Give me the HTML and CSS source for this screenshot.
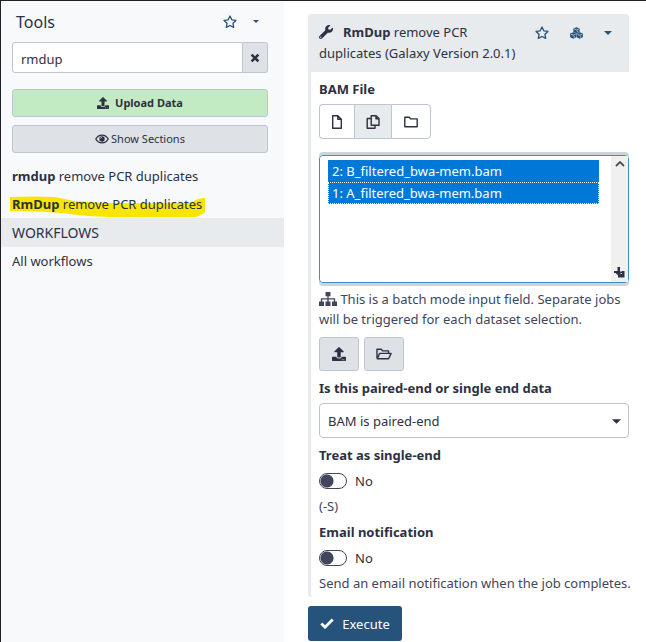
FILE: index.html
```html
<!DOCTYPE html>
<html lang="en">
<head>
<meta charset="utf-8">
<meta name="viewport" content="width=device-width, initial-scale=1">
<title>RmDup - Galaxy</title>
<link rel="stylesheet" href="styles.css">
</head>
<body>
<svg class="defs" aria-hidden="true">
  <symbol id="star" viewBox="0 0 16 16"><path d="M8 1.200l2.100 4.300 4.700.7-3.400 3.300.8 4.700L8 12l-4.200 2.200.8-4.700L1.200 6.200l4.700-.7z" fill="none" stroke="currentColor" stroke-width="1.500" stroke-linejoin="round"/></symbol>
  <symbol id="caret" viewBox="0 0 8 4"><path d="M0 0h8L4 4z" fill="currentColor"/></symbol>
  <symbol id="upload" viewBox="0 0 512 512"><path fill="currentColor" d="M296 384h-80c-13.300 0-24-10.700-24-24V192h-87.700c-17.800 0-26.700-21.500-14.100-34.100L242.300 5.700c7.500-7.500 19.800-7.500 27.300 0l152.200 152.200c12.600 12.600 3.700 34.100-14.100 34.100H320v168c0 13.300-10.700 24-24 24zm216-8v112c0 13.300-10.700 24-24 24H24c-13.300 0-24-10.700-24-24V376c0-13.300 10.700-24 24-24h136v8c0 30.900 25.100 56 56 56h80c30.900 0 56-25.100 56-56v-8h136c13.300 0 24 10.700 24 24zm-124 88c0-11-9-20-20-20s-20 9-20 20 9 20 20 20 20-9 20-20zm64 0c0-11-9-20-20-20s-20 9-20 20 9 20 20 20 20-9 20-20z"/></symbol>
  <symbol id="eye" viewBox="0 0 14 10"><path d="M.8 5C3.600-.2 10.400-.2 13.200 5 10.400 10.200 3.600 10.200.8 5z" fill="none" stroke="currentColor" stroke-width="1.300"/><circle cx="7" cy="5" r="2.700" fill="currentColor"/><path d="M5.600 4.700A1.500 1.500 0 0 1 7 3.300" fill="none" stroke="#dee2e6" stroke-width=".7"/></symbol>
  <symbol id="times" viewBox="0 0 10 10"><path d="M1.600 1.600l6.800 6.800M8.400 1.600L1.600 8.400" stroke="currentColor" stroke-width="2.600"/></symbol>
  <symbol id="wrench" viewBox="0 0 512 512"><path fill="currentColor" d="M507.700 109.100c-2.200-9-13.500-12.100-20.100-5.500l-74.400 74.400-67.900-11.300L334 98.900l74.400-74.400c6.600-6.600 3.400-17.900-5.700-20.200-47.400-11.700-99.600.9-136.600 37.900-39.600 39.600-50.600 97.100-34.100 147.200L18.700 402.800c-25 25-25 65.500 0 90.500s65.500 25 90.500 0l213.200-213.200c50.100 16.700 107.500 5.700 147.400-34.200 37.100-37.100 49.700-89.300 37.900-136.800zM64 472a24 24 0 1 1 0-48 24 24 0 0 1 0 48z"/></symbol>
  <symbol id="cubes" viewBox="0 0 14 13"><path fill="currentColor" d="M7 .2l3.400 1.300v3.900L7 6.800 3.600 5.400V1.500zM3.500 5.800L6.800 7.100v4.100l-3.300 1.600L.1 11.200V7.100zM10.500 5.800l3.400 1.300v4.100l-3.400 1.600-3.300-1.600V7.100z"/><path fill="none" stroke="#e7ebee" stroke-width=".8" d="M4.600 2.200L7 3.200l2.400-1M8 5.600V4M1.100 7.900l2.400 1 2.400-1M4.500 11.600V9.900M8.100 7.900l2.400 1 2.400-1M11.500 11.600V9.900"/></symbol>
  <symbol id="file" viewBox="0 0 12 14"><path d="M1.700.8h5.100l3.500 3.500v8.900H1.700zM6.800.8v3.500h3.500" fill="none" stroke="currentColor" stroke-width="1.400" stroke-linejoin="round"/></symbol>
  <symbol id="copy" viewBox="0 0 14 14"><path d="M5.200.7h4.900L13 3.600v6.700H5.200zM10 .8v2.900h3M5 3.500H1.200v9.800H9v-3" fill="none" stroke="currentColor" stroke-width="1.400" stroke-linejoin="round"/></symbol>
  <symbol id="folder" viewBox="0 0 14 12"><path d="M.8 1.300h4.400l1.500 1.600h6.500v7.900H.8z" fill="none" stroke="currentColor" stroke-width="1.400" stroke-linejoin="round"/></symbol>
  <symbol id="folder-open" viewBox="0 0 16 12"><path d="M1 10V1.200h4.200l1.600 1.700h5.700v2.400M1.200 10.700l2.500-5.300h11.400l-2.500 5.300z" fill="none" stroke="currentColor" stroke-width="1.400" stroke-linejoin="round"/></symbol>
  <symbol id="sitemap" viewBox="0 0 18 14"><path fill="currentColor" d="M6.500 0h5v4.300h-5zM0 9.500h5V14H0zM6.500 9.500h5V14h-5zM13 9.500h5V14h-5z"/><path d="M9 4v6M2.500 10V6.800h13V10" fill="none" stroke="currentColor" stroke-width="1.300"/></symbol>
  <symbol id="check" viewBox="0 0 14 11"><path d="M1.300 5.500l3.700 3.700 7.700-7.700" fill="none" stroke="currentColor" stroke-width="2.800"/></symbol>
  <symbol id="chevron" viewBox="0 0 10 6"><path d="M1 5l4-4 4 4" fill="none" stroke="currentColor" stroke-width="1.800"/></symbol>
  <symbol id="resize" viewBox="0 0 11 11"><path fill="currentColor" d="M0 4h3.500V0H6v4.500h2V4h2.500v6.500H4V8.300L1.500 6H0z"/><path d="M6.500 6.500h1.500" stroke="#f0f0f0" stroke-width="1"/></symbol>
</svg>
<div class="app">
  <aside class="sidebar">
    <header class="side-head">
      <h1>Tools</h1>
      <button class="plain" aria-label="Favorites"><svg class="star"><use href="#star"/></svg></button>
      <button class="plain" aria-label="Tool options"><svg class="caret-sm"><use href="#caret"/></svg></button>
    </header>
    <div class="search">
      <input type="text" value="rmdup" aria-label="Search tools">
      <button aria-label="Clear search"><svg class="times"><use href="#times"/></svg></button>
    </div>
    <button class="wide upload"><svg class="i12"><use href="#upload"/></svg>Upload Data</button>
    <button class="wide sections"><svg class="eye"><use href="#eye"/></svg>Show Sections</button>
    <nav>
      <a href="#rmdup"><b>rmdup</b> remove PCR duplicates</a>
      <a class="marked" href="#rmdup2">
        <svg class="marker" viewBox="0 0 197 22" preserveAspectRatio="none"><path d="M1 1q25-1 45 0l19 4c30 3 72 2 115 2 7-2 8-5 16-5v14q-5 5-12 5H110c-30 0-40-2-58-4-20-2-35-1-51-2z" fill="#f9e600"/></svg>
        <span><b>RmDup</b> remove PCR duplicates</span></a>
      <h2>WORKFLOWS</h2>
      <a href="#workflows">All workflows</a>
    </nav>
  </aside>
  <main>
    <form class="tool">
      <header class="tool-head">
        <p><svg class="wrench"><use href="#wrench"/></svg><b>RmDup</b> remove PCR duplicates (Galaxy Version 2.0.1)</p>
        <div class="tool-actions">
          <button type="button" class="plain" aria-label="Add to favorites"><svg class="star"><use href="#star"/></svg></button>
          <button type="button" class="plain" aria-label="Versions"><svg class="cubes"><use href="#cubes"/></svg></button>
          <button type="button" class="plain" aria-label="Options"><svg class="caret"><use href="#caret"/></svg></button>
        </div>
      </header>
      <div class="tool-body">
        <label class="title" for="bam">BAM File</label>
        <div class="group">
          <button type="button" aria-label="Single dataset"><svg class="file"><use href="#file"/></svg></button>
          <button type="button" class="active" aria-label="Multiple datasets"><svg class="copy"><use href="#copy"/></svg></button>
          <button type="button" aria-label="Dataset collection"><svg class="folder"><use href="#folder"/></svg></button>
        </div>
        <div class="list">
          <select id="bam" multiple size="5">
            <option selected>2: B_filtered_bwa-mem.bam</option>
            <option class="focused" selected>1: A_filtered_bwa-mem.bam</option>
          </select>
          <div class="track"><svg class="chevron"><use href="#chevron"/></svg><svg class="resize"><use href="#resize"/></svg></div>
        </div>
        <p class="help batch"><svg class="sitemap"><use href="#sitemap"/></svg> This is a batch mode input field. Separate jobs will be triggered for each dataset selection.</p>
        <div class="file-actions">
          <button type="button" aria-label="Upload dataset"><svg class="i14"><use href="#upload"/></svg></button>
          <button type="button" aria-label="Browse datasets"><svg class="folder-open"><use href="#folder-open"/></svg></button>
        </div>
        <label class="title" for="paired">Is this paired-end or single end data</label>
        <div class="drop">
          <select id="paired"><option>BAM is paired-end</option></select>
          <svg class="arrow"><use href="#caret"/></svg>
        </div>
        <h3 class="title">Treat as single-end</h3>
        <label class="switch"><input type="checkbox">No</label>
        <p class="help">(-S)</p>
        <h3 class="title">Email notification</h3>
        <label class="switch"><input type="checkbox">No</label>
        <p class="help line">Send an email notification when the job completes.</p>
      </div>
    </form>
    <button class="execute"><svg class="check"><use href="#check"/></svg>Execute</button>
  </main>
</div>
</body>
</html>
```

FILE: styles.css
```css
* { box-sizing: border-box; }
body {
  margin: 0;
  font: 13px/20px "Noto Sans", "Open Sans", sans-serif;
  color: #2c3143;
  background: #fff;
}
button, input, select { font: inherit; color: inherit; margin: 0; }
button { padding: 0; display: flex; align-items: center; justify-content: center; }
h1, h2, h3, p { margin: 0; font-weight: 400; }
svg { display: block; flex: none; }
.defs { display: none; }
.app {
  display: grid;
  grid-template-columns: 283px 1fr;
  min-height: 100vh;
  border-top: 1px solid #212025;
  border-left: 1px solid #212025;
}
.sidebar { background: #f8f9fb; }
.side-head { display: flex; align-items: center; gap: 16px; height: 41px; padding: 0 25px 0 15px; }
h1 { flex: 1; font-size: 16px; }
.plain { border: 0; background: none; color: #25537b; }
.star { width: 14px; height: 14px; }
.caret-sm { width: 6px; height: 3px; }
.caret { width: 8px; height: 4px; }
.search { display: flex; height: 31px; margin: 0 16px 16px 11px; }
.search input {
  flex: 1; min-width: 0; padding: 2px 8px 0;
  border: 1px solid #bdc6d0; border-radius: 3px 0 0 3px; background: #fff;
}
.search button { width: 25px; border: 1px solid #bdc6d0; border-left: 0; border-radius: 0 3px 3px 0; background: #dee2e6; }
.times { width: 10px; height: 10px; }
.wide {
  width: calc(100% - 27px); height: 28px; margin: 0 16px 8px 11px;
  border: 1px solid #bdc6d0; border-radius: 3px; font-size: 11px;
}
.upload { background: #c3ebc3; font-weight: 700; gap: 6px; }
.sections { background: #dee2e6; gap: 2px; }
.i12 { width: 12px; height: 12px; }
.i14 { width: 14px; height: 14px; }
.eye { width: 14px; height: 10px; }
nav { padding-top: 1px; }
nav a { display: block; padding: 4px 11px; color: inherit; text-decoration: none; }
.marked { position: relative; }
.marked span { position: relative; }
.marker { position: absolute; left: 8px; top: 6px; width: 197px; height: 22px; }
h2 { padding: 3px 11px; height: 29px; font-size: 14px; line-height: 24px; background: #e7ebee; }
main { padding: 13px 17px 0 24px; min-width: 0; }
.tool { border-left: 3px solid #e7ebee; border-radius: 4px; }
.tool-head {
  display: flex; justify-content: space-between;
  margin-left: -3px; padding: 8px 17px 8px 11px;
  background: #e7ebee; border-radius: 4px 4px 0 0; line-height: 21px;
}
.tool-head p { flex: 0 1 206px; }
.tool-actions { display: flex; height: 22px; gap: 21px; }
.wrench { display: inline-block; width: 14px; height: 14px; margin-right: 10px; vertical-align: -2px; }
.cubes { width: 13px; height: 12px; }
.tool-body { padding: 7px 0 4px 8px; }
.title { display: block; font-size: 13px; font-weight: 700; }
.group { display: flex; margin: 5px 0 16px; }
.group button { width: 35px; height: 35px; border: 1px solid #bdc6d0; border-right: 0; background: #fff; }
.group button:first-child { border-radius: 4px 0 0 4px; }
.group button:last-child { width: 40px; border-right: 1px solid #bdc6d0; border-radius: 0 4px 4px 0; }
.group .active { width: 37px; background: #e7ebee; }
.file { width: 12px; height: 14px; }
.copy { width: 14px; height: 14px; }
.folder { width: 14px; height: 12px; }
.list {
  display: flex; height: 128px; margin-bottom: 6px;
  border: 1px solid #428bca; border-radius: 4px;
  box-shadow: 0 -3px #c8d4de, 0 3px #c8d4de;
}
.list select {
  flex: 1; min-width: 0; height: 100%; padding: 4px 12px 0 8px;
  border: 0; outline: 0; overflow: hidden; background: #fff; border-radius: 4px;
}
.list option { height: 22px; min-height: 22px; padding: 2px 4px 0; line-height: 20px; color: #fff; background: #0078d7 linear-gradient(#0078d7, #0078d7); }
.list option.focused { border: 1px dotted #fff; padding: 1px 3px 0; }
.track { display: flex; flex-direction: column; justify-content: space-between; align-items: center; width: 17px; padding: 5px 0 4px; background: #f0f0f0; }
.chevron { width: 10px; height: 6px; color: #505050; }
.resize { width: 11px; height: 11px; }
.help { color: #41465c; }
.line { white-space: nowrap; }
.sitemap { display: inline-block; width: 18px; height: 14px; vertical-align: -2px; }
.file-actions { display: flex; gap: 5px; margin: 8px 0 7px; }
.file-actions button { width: 40px; height: 34px; border: 1px solid #bdc6d0; border-radius: 3px; background: #dee2e6; }
.folder-open { width: 16px; height: 12px; }
.drop { position: relative; margin: 5px 0 7px; }
.drop select { appearance: none; width: 100%; height: 35px; padding: 0 8px; border: 1px solid #bdc6d0; border-radius: 4px; background: #fff; }
.arrow { position: absolute; right: 8px; top: 16px; width: 9px; height: 5px; pointer-events: none; }
.switch { display: flex; align-items: center; gap: 8px; height: 20px; margin: 6px 0 5px; }
.switch input {
  appearance: none; width: 28px; height: 16px; border: 1px solid #41465c; border-radius: 8px;
  background: radial-gradient(circle at 7px 7px, #41465c 6px, transparent 7px);
}
.switch + .help { margin-bottom: 6px; }
.switch + .line { margin-bottom: 0; }
.execute { width: 94px; height: 35px; margin-top: 9px; gap: 8px; border: 0; border-radius: 3px; background: #25537b; color: #fff; }
.check { width: 14px; height: 11px; }
```
